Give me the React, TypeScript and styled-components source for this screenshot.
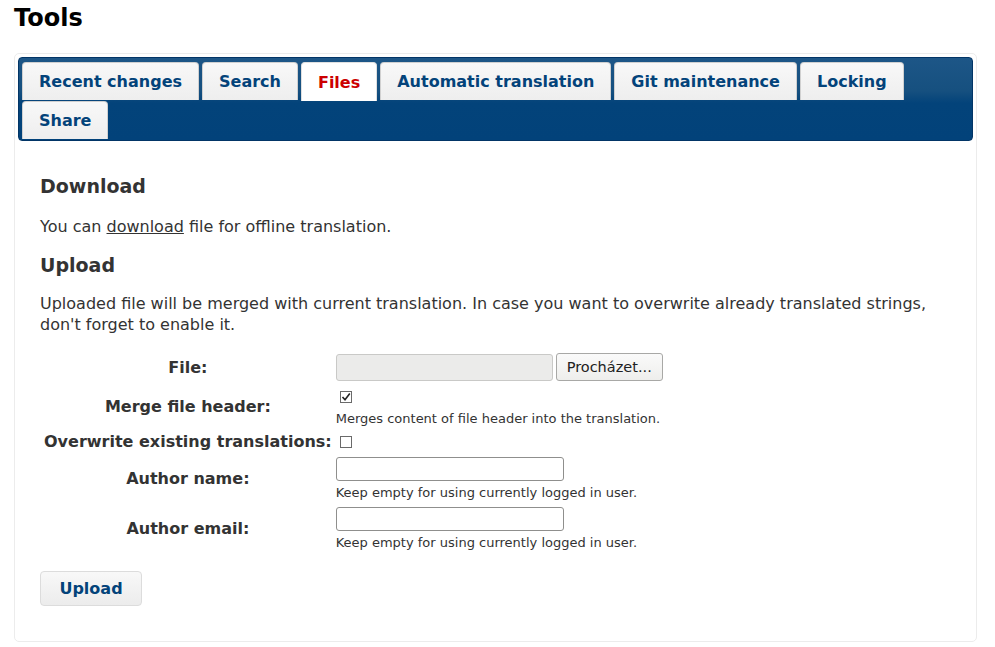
import React from "react";
import styled, { createGlobalStyle } from "styled-components";

const Global = createGlobalStyle`
  html, body { margin: 0; padding: 0; background: #fff; }
  body { font-family: "DejaVu Sans", "Liberation Sans", sans-serif; color: #333; font-size: 15px; }
`;

const Page = styled.div`
  padding: 0 18px 0 14px;
`;

const Title = styled.h1`
  margin: 0;
  padding-top: 4px;
  height: 49px;
  font-size: 24px;
  line-height: 28px;
  color: #000;
  font-weight: bold;
`;

const Tabs = styled.div`
  border: 1px solid #ececec;
  border-radius: 5px;
  padding: 3px;
`;

const Nav = styled.ul`
  list-style: none;
  margin: 0;
  padding: 4px 3px 0 3px;
  display: flex;
  flex-wrap: wrap;
  column-gap: 3px;
  row-gap: 1px;
  background: linear-gradient(to bottom, #1d5687 0%, #16507f 40%, #03437a 55%, #02427a 100%);
  border: 1px solid #023566;
  border-radius: 4px;
  height: 78px;
  align-content: flex-start;
`;

const Tab = styled.li<{ $active?: boolean }>`
  height: ${(p) => (p.$active ? "39px" : "38px")};
  margin-bottom: ${(p) => (p.$active ? "-1px" : "0")};
  box-sizing: border-box;
  border: 1px solid ${(p) => (p.$active ? "#e0e0e0" : "#d0d0d0")};
  border-bottom: 0;
  border-radius: 4px 4px 0 0;
  background: ${(p) => (p.$active ? "#fff" : "linear-gradient(to bottom, #f8f8f8 0%, #eeeeee 100%)")};
  padding: 0 16px;
  display: flex;
  align-items: center;
  font-size: 16px;
  font-weight: bold;
  color: ${(p) => (p.$active ? "#cc0000" : "#03437a")};
  white-space: nowrap;
  cursor: pointer;
`;

const Panel = styled.div`
  padding: 33px 22px 32px 22px;
`;

const H3 = styled.h3`
  margin: 0;
  font-size: 19px;
  line-height: 24px;
  font-weight: bold;
  color: #333;
`;

const P = styled.p<{ $top?: number; $bottom?: number }>`
  margin: ${(p) => p.$top ?? 18}px 0 ${(p) => p.$bottom ?? 16}px 0;
  font-size: 16px;
  line-height: 21px;
`;

const Link = styled.a`
  color: #333;
  text-decoration: underline;
`;

const FormTable = styled.table`
  border-spacing: 2px;
  margin-left: 1px;
`;

const Th = styled.th`
  padding: 1px;
  font-size: 16px;
  font-weight: bold;
  text-align: center;
  vertical-align: middle;
  white-space: nowrap;
  color: #333;
`;

const Td = styled.td`
  padding: 1px;
  vertical-align: middle;
`;

const FileRow = styled.div`
  display: flex;
  gap: 3px;
  align-items: center;
`;

const FileBox = styled.div`
  width: 217px;
  height: 27px;
  box-sizing: border-box;
  background: #ebebea;
  border: 1px solid #c9c9c7;
  border-radius: 3px;
`;

const BrowseButton = styled.button`
  width: 107px;
  height: 28px;
  box-sizing: border-box;
  border: 1px solid #a8a8a6;
  border-radius: 3px;
  background: linear-gradient(to bottom, #fafafa, #eeeeec);
  font-family: "DejaVu Sans", sans-serif;
  font-size: 14.5px;
  color: #222;
  padding: 0;
`;

const Check = styled.span<{ $top: number }>`
  display: block;
  width: 12px;
  height: 12px;
  box-sizing: border-box;
  border: 1px solid #6a6a6a;
  margin: ${(p) => p.$top}px 0 3px 4px;
  position: relative;
  background: #fff;
`;

const Help = styled.div<{ $top: number; $bottom?: number }>`
  font-size: 13px;
  line-height: 16px;
  color: #333;
  margin-top: ${(p) => p.$top}px;
  margin-bottom: ${(p) => p.$bottom ?? 0}px;
`;

const TextInput = styled.input`
  display: block;
  width: 228px;
  height: 24px;
  box-sizing: border-box;
  border: 1px solid #8f8f8d;
  border-radius: 3px;
  background: #fff;
  margin: 2px 0 0 0;
`;

const UploadButton = styled.button`
  margin-top: 17px;
  width: 102px;
  height: 35px;
  border: 1px solid #dcdcdc;
  border-radius: 4px;
  background: linear-gradient(to bottom, #f8f8f8, #ececec);
  color: #03437a;
  font-family: "DejaVu Sans", sans-serif;
  font-size: 16px;
  font-weight: bold;
  padding: 0;
`;

const CheckMark = () => (
  <svg width="10" height="10" viewBox="0 0 10 10" style={{ position: "absolute", left: 0, top: 0 }}>
    <path d="M1.5 5 L4 7.8 L8.8 1.5" fill="none" stroke="#222" strokeWidth="1.6" />
  </svg>
);

const tabs = ["Recent changes", "Search", "Files", "Automatic translation", "Git maintenance", "Locking", "Share"];

export default function App() {
  return (
    <>
      <Global />
      <Page>
        <Title>Tools</Title>
        <Tabs>
          <Nav>
            {tabs.map((t) => (
              <Tab key={t} $active={t === "Files"}>{t}</Tab>
            ))}
          </Nav>
          <Panel>
            <H3>Download</H3>
            <P>You can <Link href="#">download</Link> file for offline translation.</P>
            <H3>Upload</H3>
            <P $top={16} $bottom={15}>Uploaded file will be merged with current translation. In case you want to overwrite already translated strings, don't forget to enable it.</P>
            <FormTable>
              <tbody>
                <tr>
                  <Th>File:</Th>
                  <Td>
                    <FileRow>
                      <FileBox />
                      <BrowseButton>Procházet...</BrowseButton>
                    </FileRow>
                  </Td>
                </tr>
                <tr>
                  <Th>Merge file header:</Th>
                  <Td>
                    <Check $top={6}><CheckMark /></Check>
                    <Help $top={8} $bottom={1}>Merges content of file header into the translation.</Help>
                  </Td>
                </tr>
                <tr>
                  <Th>Overwrite existing translations:</Th>
                  <Td><Check $top={4} /></Td>
                </tr>
                <tr>
                  <Th>Author name:</Th>
                  <Td>
                    <TextInput type="text" />
                    <Help $top={4}>Keep empty for using currently logged in user.</Help>
                  </Td>
                </tr>
                <tr>
                  <Th>Author email:</Th>
                  <Td>
                    <TextInput type="text" />
                    <Help $top={4}>Keep empty for using currently logged in user.</Help>
                  </Td>
                </tr>
              </tbody>
            </FormTable>
            <UploadButton>Upload</UploadButton>
          </Panel>
        </Tabs>
      </Page>
    </>
  );
}
